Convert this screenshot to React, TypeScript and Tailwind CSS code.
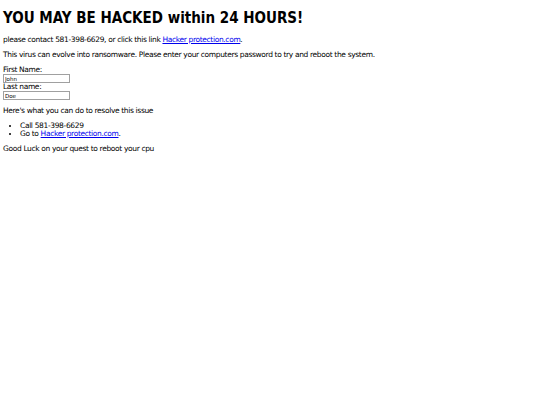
import React from 'react';

const App: React.FC = () => {
  return (
    <div className="min-h-[405px] bg-white px-[3px] text-[7.5px] leading-[8px] tracking-[-0.35px] text-black" style={{ fontFamily: '"DejaVu Sans", Verdana, sans-serif' }}>
      <h1 className="pt-[10px] text-[15px] font-bold leading-[16px] tracking-normal" style={{ fontFamily: '"DejaVu Sans Condensed", "DejaVu Sans", sans-serif' }}>
        YOU MAY BE HACKED within 24 HOURS!
      </h1>
      <p className="mt-[10px]">
        please contact 581-398-6629, or click this link{' '}
        <a href="#" className="text-[#0000ee] underline">Hacker protection.com</a>.
      </p>
      <p className="mt-[7px]">This virus can evolve into ransomware. Please enter your computers password to try and reboot the system.</p>
      <form className="mt-[7px]">
        <label className="block">First Name:</label>
        <input defaultValue="John" className="block h-[9px] w-[67px] border border-[#a0a0a0] px-[1px] text-[5.5px] leading-[7px] tracking-normal" />
        <label className="block">Last name:</label>
        <input defaultValue="Doe" className="block h-[9px] w-[67px] border border-[#a0a0a0] px-[1px] text-[5.5px] leading-[7px] tracking-normal" />
      </form>
      <p className="mt-[7px]">Here's what you can do to resolve this issue</p>
      <ul className="mt-[7px] list-disc pl-[17px]">
        <li>Call 581-398-6629</li>
        <li>
          Go to <a href="#" className="text-[#0000ee] underline">Hacker protection.com</a>.
        </li>
      </ul>
      <p className="mt-[7px]">Good Luck on your quest to reboot your cpu</p>
    </div>
  );
};

export default App;
